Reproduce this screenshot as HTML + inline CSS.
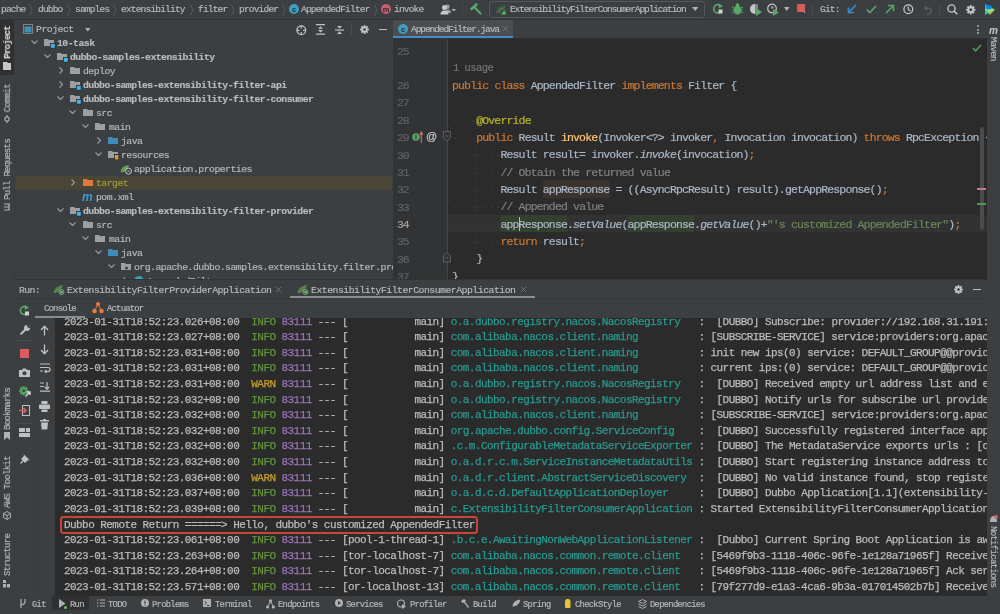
<!DOCTYPE html><html><head><meta charset="utf-8"><style>
*{margin:0;padding:0;box-sizing:border-box}
html,body{width:1000px;height:614px;overflow:hidden;background:#3c3f41;font-family:"Liberation Mono", monospace;position:relative;-webkit-font-smoothing:antialiased}
.a{position:absolute;white-space:pre;will-change:transform}
.clip{position:absolute;overflow:hidden;}
svg{position:absolute;overflow:visible}
.ws{color:#3a3a3a !important;-webkit-text-stroke:0 !important}
.cw .ws{color:#333333 !important}
.vt{position:absolute;white-space:pre;writing-mode:vertical-rl;will-change:transform}
</style></head><body>
<div class="a" style="left:0px;top:0px;width:1000px;height:19px;background:#3c3f41;"></div>
<div class="a" style="left:0px;top:19px;width:1000px;height:1px;background:#323232;"></div>
<div class="a" style="left:0px;top:20px;width:14px;height:576px;background:#3c3f41;"></div>
<div class="a" style="left:0px;top:20px;width:14px;height:55px;background:#2e3031;"></div>
<div class="a" style="left:14px;top:20px;width:1px;height:576px;background:#393b3d;"></div>
<div class="a" style="left:987px;top:20px;width:13px;height:576px;background:#3c3f41;"></div>
<div class="a" style="left:986px;top:20px;width:1px;height:576px;background:#333536;"></div>
<div class="a" style="left:15px;top:20px;width:378px;height:259px;background:#3c3f41;"></div>
<div class="a" style="left:392.5px;top:38px;width:0.5px;height:241px;background:#353739;"></div>
<div class="a" style="left:393px;top:20px;width:594px;height:18px;background:#3c3f41;"></div>
<div class="a" style="left:393px;top:20px;width:120px;height:18px;background:#4b4e50;"></div>
<div class="a" style="left:393px;top:36px;width:120px;height:2px;background:#4a88c7;"></div>
<div class="a" style="left:393px;top:38px;width:594px;height:1px;background:#323232;"></div>
<div class="a" style="left:393px;top:39px;width:54px;height:240px;background:#313335;"></div>
<div class="a" style="left:447px;top:39px;width:1px;height:240px;background:#444648;"></div>
<div class="a" style="left:448px;top:39px;width:539px;height:240px;background:#2b2b2b;"></div>
<div class="a" style="left:14px;top:279px;width:973px;height:1px;background:#333535;"></div>
<div class="a" style="left:15px;top:280px;width:972px;height:18px;background:#3c3f41;"></div>
<div class="a" style="left:15px;top:298px;width:972px;height:1px;background:#37393b;"></div>
<div class="a" style="left:15px;top:299px;width:20px;height:297px;background:#3c3f41;"></div>
<div class="a" style="left:34px;top:299px;width:1px;height:297px;background:#37393b;"></div>
<div class="a" style="left:35px;top:299px;width:952px;height:18px;background:#3c3f41;"></div>
<div class="a" style="left:35px;top:316px;width:50px;height:2px;background:#8c8c8c;"></div>
<div class="a" style="left:35px;top:318px;width:20px;height:278px;background:#3c3f41;"></div>
<div class="a" style="left:55px;top:318px;width:932px;height:277.6px;background:#2b2b2b;"></div>
<div class="a" style="left:0px;top:595.6px;width:1000px;height:0.4px;background:#37393b;"></div>
<div class="a" style="left:0px;top:596px;width:1000px;height:18px;background:#3c3f41;"></div>
<div class="a" style="left:52px;top:596px;width:37px;height:14px;background:#2e3031;"></div>
<div class="a" style="left:1px;top:3.5px;font-size:9.5px;line-height:11px;color:#bbbbbb;letter-spacing:-0.8px;font-weight:normal;-webkit-text-stroke:0.15px #bbbbbb;">pache</div>
<div class="a" style="left:38px;top:3.5px;font-size:9.5px;line-height:11px;color:#bbbbbb;letter-spacing:-0.8px;font-weight:normal;-webkit-text-stroke:0.15px #bbbbbb;">dubbo</div>
<div class="a" style="left:75px;top:3.5px;font-size:9.5px;line-height:11px;color:#bbbbbb;letter-spacing:-0.8px;font-weight:normal;-webkit-text-stroke:0.15px #bbbbbb;">samples</div>
<div class="a" style="left:121px;top:3.5px;font-size:9.5px;line-height:11px;color:#bbbbbb;letter-spacing:-0.8px;font-weight:normal;-webkit-text-stroke:0.15px #bbbbbb;">extensibility</div>
<div class="a" style="left:198px;top:3.5px;font-size:9.5px;line-height:11px;color:#bbbbbb;letter-spacing:-0.8px;font-weight:normal;-webkit-text-stroke:0.15px #bbbbbb;">filter</div>
<div class="a" style="left:239px;top:3.5px;font-size:9.5px;line-height:11px;color:#bbbbbb;letter-spacing:-0.8px;font-weight:normal;-webkit-text-stroke:0.15px #bbbbbb;">provider</div>
<div class="a" style="left:301px;top:3.5px;font-size:9.5px;line-height:11px;color:#bbbbbb;letter-spacing:-0.8px;font-weight:normal;-webkit-text-stroke:0.15px #bbbbbb;">AppendedFilter</div>
<div class="a" style="left:394px;top:3.5px;font-size:9.5px;line-height:11px;color:#bbbbbb;letter-spacing:-0.8px;font-weight:normal;-webkit-text-stroke:0.15px #bbbbbb;">invoke</div>
<svg style="left:29px;top:3.5px" width="4" height="12" viewBox="0 0 4 12"><path d="M0.5 0.5 L3 6 L0.5 11.5" fill="none" stroke="#5b5e60" stroke-width="0.9"/></svg>
<svg style="left:67px;top:3.5px" width="4" height="12" viewBox="0 0 4 12"><path d="M0.5 0.5 L3 6 L0.5 11.5" fill="none" stroke="#5b5e60" stroke-width="0.9"/></svg>
<svg style="left:113px;top:3.5px" width="4" height="12" viewBox="0 0 4 12"><path d="M0.5 0.5 L3 6 L0.5 11.5" fill="none" stroke="#5b5e60" stroke-width="0.9"/></svg>
<svg style="left:190px;top:3.5px" width="4" height="12" viewBox="0 0 4 12"><path d="M0.5 0.5 L3 6 L0.5 11.5" fill="none" stroke="#5b5e60" stroke-width="0.9"/></svg>
<svg style="left:231px;top:3.5px" width="4" height="12" viewBox="0 0 4 12"><path d="M0.5 0.5 L3 6 L0.5 11.5" fill="none" stroke="#5b5e60" stroke-width="0.9"/></svg>
<svg style="left:282px;top:3.5px" width="4" height="12" viewBox="0 0 4 12"><path d="M0.5 0.5 L3 6 L0.5 11.5" fill="none" stroke="#5b5e60" stroke-width="0.9"/></svg>
<svg style="left:374px;top:3.5px" width="4" height="12" viewBox="0 0 4 12"><path d="M0.5 0.5 L3 6 L0.5 11.5" fill="none" stroke="#5b5e60" stroke-width="0.9"/></svg>
<svg style="left:288.5px;top:4px" width="10" height="10" viewBox="0 0 10 10"><circle cx="5.0" cy="5.0" r="5.0" fill="#3f9bbf"/><text x="5.0" y="7.6" font-size="7.5" text-anchor="middle" font-family="Liberation Sans" font-weight="bold" fill="#2b2b2b">c</text></svg>
<svg style="left:381px;top:4px" width="10" height="10" viewBox="0 0 10 10"><circle cx="5.0" cy="5.0" r="5.0" fill="#c75f6e"/><text x="5.0" y="7.6" font-size="7.5" text-anchor="middle" font-family="Liberation Sans" font-weight="bold" fill="#2b2b2b">m</text></svg>
<svg style="left:440px;top:4px" width="17" height="11" viewBox="0 0 17 11"><circle cx="7.5" cy="2.8" r="2.2" fill="#9c9ea0"/><path d="M5 9 Q5 5.5 8 5.5 Q11 5.5 11 9 Z" fill="#9c9ea0"/><circle cx="4.5" cy="3.5" r="2.5" fill="#c8c8c8"/><path d="M0.5 10.5 Q0.5 6.5 4.5 6.5 Q8.5 6.5 8.5 10.5 Z" fill="#c8c8c8"/><path d="M11.5 5 L16 5 L13.75 7.5 Z" fill="#afb1b3"/></svg>
<div class="a" style="left:463px;top:3px;width:1px;height:13px;background:#424547;"></div>
<svg style="left:470px;top:3px" width="13" height="13" viewBox="0 0 13 13"><path d="M1.5 6 L6.5 1.5" stroke="#59a869" stroke-width="2.6" stroke-linecap="round"/><path d="M4 3.8 L10.5 10.5" stroke="#59a869" stroke-width="2" stroke-linecap="round"/></svg>
<div class="a" style="left:489px;top:1px;width:216px;height:17px;background:transparent;border:1px solid #555759;border-radius:3px;"></div>
<svg style="left:495px;top:3px" width="14" height="12" viewBox="0 0 14 12"><path d="M1 10 Q2 3 11 2 Q9 8 3 10 Z" fill="#3f6a3a" opacity="0.9"/><circle cx="7.5" cy="8.5" r="3" fill="none" stroke="#6a6d70" stroke-width="0.8"/><circle cx="9" cy="10" r="1.8" fill="#3fd04a"/></svg>
<div class="a" style="left:510px;top:3.5px;font-size:9.5px;line-height:11px;color:#bbbbbb;letter-spacing:-1.08px;font-weight:normal;-webkit-text-stroke:0.15px #bbbbbb;">ExtensibilityFilterConsumerApplication</div>
<svg style="left:692px;top:7px" width="7" height="5" viewBox="0 0 7 5"><path d="M0 0 H6.5 L3.25 4 Z" fill="#afb1b3"/></svg>
<svg style="left:712px;top:3px" width="12" height="12" viewBox="0 0 12 12"><path d="M9 3 A4.2 4.2 0 1 0 9.5 8" fill="none" stroke="#59a869" stroke-width="1.6"/><path d="M6.5 0.5 L11 3 L7 5.5 Z" fill="#59a869"/><rect x="6.5" y="6.5" width="4" height="4" fill="#d0d0d0"/></svg>
<svg style="left:732px;top:3px" width="11" height="12" viewBox="0 0 11 12"><ellipse cx="5.5" cy="7" rx="3.5" ry="4.5" fill="#59a869"/><path d="M0 4 L11 10 M11 4 L0 10 M0 7 H11" stroke="#59a869" stroke-width="1"/><circle cx="5.5" cy="2" r="1.8" fill="#59a869"/></svg>
<svg style="left:750px;top:3px" width="13" height="13" viewBox="0 0 13 13"><path d="M5 1 A5 5 0 1 0 5 11 Z" fill="#c5c5c5"/><path d="M5 1 H8 V11 H5" fill="#c5c5c5" opacity="0.5"/><path d="M6 5 L12 9 L6 13 Z" fill="#59a869"/></svg>
<svg style="left:767px;top:3px" width="13" height="13" viewBox="0 0 13 13"><circle cx="5" cy="5.5" r="4.3" fill="none" stroke="#c5c5c5" stroke-width="1.2"/><path d="M5 3 V5.5 L6.5 4" stroke="#c5c5c5" fill="none"/><path d="M6 6 L12 9.5 L6 13 Z" fill="#59a869"/></svg>
<svg style="left:784px;top:7px" width="6" height="5" viewBox="0 0 6 5"><path d="M0 0 H5.5 L2.75 4 Z" fill="#afb1b3"/></svg>
<svg style="left:797px;top:4px" width="9" height="10" viewBox="0 0 9 10"><rect x="0" y="0" width="8" height="8" rx="0.8" fill="#db5c5c"/><path d="M7 7 L8 9" stroke="#afb1b3"/></svg>
<div class="a" style="left:812px;top:3px;width:1px;height:13px;background:#4a4d4f;"></div>
<div class="a" style="left:820px;top:3.5px;font-size:9.5px;line-height:11px;color:#bbbbbb;letter-spacing:-0.8px;font-weight:normal;-webkit-text-stroke:0.15px #bbbbbb;">Git:</div>
<svg style="left:848px;top:4px" width="9" height="10" viewBox="0 0 9 10"><path d="M8 1 L1.5 7.5" stroke="#3d8fd0" stroke-width="1.6"/><path d="M0.5 3.5 V8.5 H5.5" fill="none" stroke="#3d8fd0" stroke-width="1.6"/></svg>
<svg style="left:866px;top:5px" width="11" height="9" viewBox="0 0 11 9"><path d="M0.8 4.5 L3.8 7.5 L10 1" fill="none" stroke="#59a869" stroke-width="1.6"/></svg>
<svg style="left:885px;top:4px" width="9" height="10" viewBox="0 0 9 10"><path d="M1 9 L7.5 2.5" stroke="#59a869" stroke-width="1.6"/><path d="M3 1.5 H8.5 V7" fill="none" stroke="#59a869" stroke-width="1.6"/></svg>
<svg style="left:903px;top:4px" width="11" height="11" viewBox="0 0 11 11"><circle cx="5.3" cy="5.3" r="4.4" fill="none" stroke="#c5c5c5" stroke-width="1.3"/><path d="M5.3 2.5 V5.5 L7.5 7" fill="none" stroke="#c5c5c5" stroke-width="1.2"/></svg>
<svg style="left:924px;top:5px" width="9" height="9" viewBox="0 0 9 9"><path d="M3 1 L0.8 3.2 L3 5.4 M1 3.2 H5 A3 3 0 0 1 5 9 H3" fill="none" stroke="#5d6062" stroke-width="1.2"/></svg>
<div class="a" style="left:939px;top:3px;width:1px;height:13px;background:#4a4d4f;"></div>
<svg style="left:947px;top:4px" width="11" height="11" viewBox="0 0 11 11"><circle cx="4.5" cy="4.5" r="3.6" fill="none" stroke="#c5c5c5" stroke-width="1.4"/><path d="M7 7 L10.3 10.3" stroke="#c5c5c5" stroke-width="1.6"/></svg>
<svg style="left:966px;top:5px" width="9.5" height="9.5" viewBox="0 0 9.5 9.5"><circle cx="4.75" cy="4.75" r="3.2300000000000004" fill="#c5c5c5"/><line x1="7.36" y1="4.75" x2="9.41" y2="4.75" stroke="#c5c5c5" stroke-width="1.90"/><line x1="6.60" y1="6.60" x2="8.04" y2="8.04" stroke="#c5c5c5" stroke-width="1.90"/><line x1="4.75" y1="7.36" x2="4.75" y2="9.41" stroke="#c5c5c5" stroke-width="1.90"/><line x1="2.90" y1="6.60" x2="1.46" y2="8.04" stroke="#c5c5c5" stroke-width="1.90"/><line x1="2.14" y1="4.75" x2="0.09" y2="4.75" stroke="#c5c5c5" stroke-width="1.90"/><line x1="2.90" y1="2.90" x2="1.46" y2="1.46" stroke="#c5c5c5" stroke-width="1.90"/><line x1="4.75" y1="2.14" x2="4.75" y2="0.09" stroke="#c5c5c5" stroke-width="1.90"/><line x1="6.60" y1="2.90" x2="8.04" y2="1.46" stroke="#c5c5c5" stroke-width="1.90"/><circle cx="4.75" cy="4.75" r="1.425" fill="#3c3f41"/></svg>
<svg style="left:984px;top:3px" width="12" height="13" viewBox="0 0 12 13"><path d="M1 1 L11 6.5 L1 12 Z" fill="#21d789"/><path d="M1 1 L8 3 L4 12 Z" fill="#087cfa" opacity="0.85"/><path d="M1 6 L11 6.5 L6 12 Z" fill="#fcf84a" opacity="0.6"/></svg>
<div class="a" style="writing-mode:vertical-rl;left:2.5px;top:26.3px;height:32.7px;width:11px;font-size:9px;line-height:11px;color:#d8d8d8;letter-spacing:-0.729px;font-weight:bold;transform:rotate(180deg);-webkit-text-stroke:0.15px #d8d8d8">Project</div>
<svg style="left:3px;top:62px" width="8" height="9" viewBox="0 0 8 9"><path d="M0 0 H4 L5 1 H8 V8 H0 Z" fill="#c8c8c8"/></svg>
<div class="a" style="writing-mode:vertical-rl;left:2.5px;top:84.39999999999999px;height:28.400000000000013px;width:11px;font-size:9px;line-height:11px;color:#bbbbbb;letter-spacing:-0.667px;font-weight:normal;transform:rotate(180deg);-webkit-text-stroke:0.15px #bbbbbb">Commit</div>
<svg style="left:3px;top:115px" width="8" height="8" viewBox="0 0 8 8"><circle cx="4" cy="4" r="2.2" fill="none" stroke="#afb1b3" stroke-width="1.2"/><path d="M4 0 V1.8 M4 6.2 V8" stroke="#afb1b3" stroke-width="1.2"/></svg>
<div class="a" style="writing-mode:vertical-rl;left:2.5px;top:139.29999999999998px;height:60.90000000000001px;width:11px;font-size:9px;line-height:11px;color:#bbbbbb;letter-spacing:-0.715px;font-weight:normal;transform:rotate(180deg);-webkit-text-stroke:0.15px #bbbbbb">Pull Requests</div>
<svg style="left:3px;top:203px" width="8" height="8" viewBox="0 0 8 8"><path d="M1 1 H7 M1 4 H6 M1 7 H7 M6 1 V7" stroke="#afb1b3" stroke-width="1.2" fill="none"/></svg>
<div class="a" style="writing-mode:vertical-rl;left:2.5px;top:387.8px;height:41.90000000000002px;width:11px;font-size:9px;line-height:11px;color:#bbbbbb;letter-spacing:-0.744px;font-weight:normal;transform:rotate(180deg);-webkit-text-stroke:0.15px #bbbbbb">Bookmarks</div>
<svg style="left:3px;top:432px" width="8" height="8" viewBox="0 0 8 8"><path d="M1 0 H7 V8 L4 5.5 L1 8 Z" fill="#afb1b3"/></svg>
<div class="a" style="writing-mode:vertical-rl;left:2.5px;top:455.6px;height:52.3px;width:11px;font-size:9px;line-height:11px;color:#bbbbbb;letter-spacing:-0.645px;font-weight:normal;transform:rotate(180deg);-webkit-text-stroke:0.15px #bbbbbb">AWS Toolkit</div>
<svg style="left:3px;top:510.5px" width="8" height="9" viewBox="0 0 8 9"><path d="M4 0.5 L7.5 2.5 V6.5 L4 8.5 L0.5 6.5 V2.5 Z M0.5 2.5 L4 4.5 L7.5 2.5 M4 4.5 V8.5" fill="none" stroke="#afb1b3" stroke-width="1"/></svg>
<div class="a" style="writing-mode:vertical-rl;left:2.5px;top:534.1px;height:42.09999999999995px;width:11px;font-size:9px;line-height:11px;color:#bbbbbb;letter-spacing:-0.722px;font-weight:normal;transform:rotate(180deg);-webkit-text-stroke:0.15px #bbbbbb">Structure</div>
<svg style="left:3px;top:579.5px" width="8" height="8" viewBox="0 0 8 8"><rect x="0" y="4" width="3" height="3.5" fill="#afb1b3"/><rect x="4" y="4" width="3" height="3.5" fill="#afb1b3"/><rect x="0" y="0" width="3" height="3" fill="#afb1b3"/></svg>
<svg style="left:989px;top:27px" width="10" height="7" viewBox="0 0 10 7"><text x="0" y="6.5" font-family="Liberation Sans" font-style="italic" font-weight="bold" font-size="10" fill="#c8c8c8">m</text></svg>
<div class="a" style="writing-mode:vertical-rl;left:987.0px;top:37.1px;height:23.599999999999998px;width:11px;font-size:9px;line-height:11px;color:#bbbbbb;letter-spacing:-0.680px;font-weight:normal;-webkit-text-stroke:0.15px #bbbbbb">Maven</div>
<svg style="left:989px;top:515px" width="9" height="8" viewBox="0 0 9 8"><path d="M1 7 Q1 1 4.5 1 Q8 1 8 7 Z" fill="#afb1b3"/><circle cx="7" cy="1.8" r="1.9" fill="#e06060"/></svg>
<div class="a" style="writing-mode:vertical-rl;left:987.4px;top:525.6px;height:61.09999999999996px;width:11px;font-size:9px;line-height:11px;color:#bbbbbb;letter-spacing:-0.700px;font-weight:normal;-webkit-text-stroke:0.15px #bbbbbb">Notifications</div>
<svg style="left:23px;top:24px" width="10" height="10" viewBox="0 0 10 10"><rect x="0.5" y="0.5" width="9" height="9" fill="none" stroke="#7d8286" stroke-width="1"/><rect x="1.5" y="2.5" width="7" height="6" fill="#3d8fb5"/></svg>
<div class="a" style="left:36.4px;top:24px;font-size:9.8px;line-height:11px;color:#bbbbbb;letter-spacing:-0.5px;font-weight:normal;-webkit-text-stroke:0.15px #bbbbbb;">Project</div>
<svg style="left:85px;top:28px" width="6" height="4" viewBox="0 0 6 4"><path d="M0 0 H5.5 L2.75 3.5 Z" fill="#afb1b3"/></svg>
<svg style="left:296px;top:24.5px" width="11" height="11" viewBox="0 0 11 11"><circle cx="5.3" cy="5.3" r="4.4" fill="none" stroke="#c0c0c0" stroke-width="1.2"/><path d="M5.3 0.5 V3.5 M5.3 7 V10 M0.5 5.3 H3.5 M7 5.3 H10" stroke="#c0c0c0" stroke-width="1.2"/></svg>
<svg style="left:316px;top:24px" width="9" height="11" viewBox="0 0 9 11"><path d="M0 0.6 H9 M0 10.2 H9" stroke="#c0c0c0" stroke-width="1.2"/><path d="M4.5 2.2 L7 4.8 H2 Z M4.5 8.6 L7 6 H2 Z" fill="#c0c0c0"/></svg>
<svg style="left:335px;top:24.5px" width="9" height="10" viewBox="0 0 9 10"><path d="M0 5 H9" stroke="#c0c0c0" stroke-width="1.2"/><path d="M4.5 3.8 L7 1 H2 Z M4.5 6.2 L7 9 H2 Z" fill="#c0c0c0"/></svg>
<div class="a" style="left:351px;top:23px;width:1px;height:12px;background:#4a4d4f;"></div>
<svg style="left:359.5px;top:24.5px" width="9" height="9" viewBox="0 0 9 9"><circle cx="4.5" cy="4.5" r="3.06" fill="#c5c5c5"/><line x1="6.97" y1="4.50" x2="8.91" y2="4.50" stroke="#c5c5c5" stroke-width="1.80"/><line x1="6.25" y1="6.25" x2="7.62" y2="7.62" stroke="#c5c5c5" stroke-width="1.80"/><line x1="4.50" y1="6.97" x2="4.50" y2="8.91" stroke="#c5c5c5" stroke-width="1.80"/><line x1="2.75" y1="6.25" x2="1.38" y2="7.62" stroke="#c5c5c5" stroke-width="1.80"/><line x1="2.02" y1="4.50" x2="0.09" y2="4.50" stroke="#c5c5c5" stroke-width="1.80"/><line x1="2.75" y1="2.75" x2="1.38" y2="1.38" stroke="#c5c5c5" stroke-width="1.80"/><line x1="4.50" y1="2.02" x2="4.50" y2="0.09" stroke="#c5c5c5" stroke-width="1.80"/><line x1="6.25" y1="2.75" x2="7.62" y2="1.38" stroke="#c5c5c5" stroke-width="1.80"/><circle cx="4.5" cy="4.5" r="1.3499999999999999" fill="#3c3f41"/></svg>
<div class="a" style="left:379px;top:28.5px;width:8px;height:1.3px;background:#c0c0c0;"></div>
<div class="clip" style="left:15px;top:38px;width:377.5px;height:241px;">
<div class="a" style="left:0px;top:138px;width:377px;height:14px;background:#4a4637;"></div>
<svg style="left:16.0px;top:2.1999999999999957px" width="7" height="5" viewBox="0 0 7 5"><path d="M0.5 0.5 L3.5 3.5 L6.5 0.5" fill="none" stroke="#9a9c9e" stroke-width="1.1"/></svg>
<svg style="left:29.200000000000003px;top:1.0px" width="11" height="8" viewBox="0 0 11 8"><path d="M0 0 H4 L5 1 H10 V7 H0 Z" fill="#9aa0a6"/></svg>
<svg style="left:35.2px;top:5.0px" width="6" height="6" viewBox="0 0 6 6"><rect x="0" y="0" width="5.5" height="5.5" fill="#2b2d2e"/><rect x="0.8" y="0.8" width="4" height="4" fill="#3fb3e6"/></svg>
<div class="a" style="left:42.4px;top:0.0999999999999972px;font-size:9.8px;line-height:12px;color:#bbbbbb;letter-spacing:-0.52px;font-weight:bold;-webkit-text-stroke:0.15px #bbbbbb;">10-task</div>
<svg style="left:28.799999999999997px;top:16.199999999999996px" width="7" height="5" viewBox="0 0 7 5"><path d="M0.5 0.5 L3.5 3.5 L6.5 0.5" fill="none" stroke="#9a9c9e" stroke-width="1.1"/></svg>
<svg style="left:42.0px;top:15.0px" width="11" height="8" viewBox="0 0 11 8"><path d="M0 0 H4 L5 1 H10 V7 H0 Z" fill="#9aa0a6"/></svg>
<svg style="left:48.0px;top:19.0px" width="6" height="6" viewBox="0 0 6 6"><rect x="0" y="0" width="5.5" height="5.5" fill="#2b2d2e"/><rect x="0.8" y="0.8" width="4" height="4" fill="#3fb3e6"/></svg>
<div class="a" style="left:55.2px;top:14.099999999999998px;font-size:9.8px;line-height:12px;color:#bbbbbb;letter-spacing:-0.52px;font-weight:bold;-webkit-text-stroke:0.15px #bbbbbb;">dubbo-samples-extensibility</div>
<svg style="left:43.6px;top:29.299999999999997px" width="5" height="7" viewBox="0 0 5 7"><path d="M0.5 0.5 L3.5 3.5 L0.5 6.5" fill="none" stroke="#9a9c9e" stroke-width="1.1"/></svg>
<svg style="left:54.80000000000001px;top:29.0px" width="11" height="8" viewBox="0 0 11 8"><path d="M0 0 H4 L5 1 H10 V7 H0 Z" fill="#9aa0a6"/></svg>
<div class="a" style="left:68.0px;top:28.099999999999998px;font-size:9.8px;line-height:12px;color:#bbbbbb;letter-spacing:-0.52px;font-weight:normal;-webkit-text-stroke:0.15px #bbbbbb;">deploy</div>
<svg style="left:43.6px;top:43.3px" width="5" height="7" viewBox="0 0 5 7"><path d="M0.5 0.5 L3.5 3.5 L0.5 6.5" fill="none" stroke="#9a9c9e" stroke-width="1.1"/></svg>
<svg style="left:54.80000000000001px;top:43.0px" width="11" height="8" viewBox="0 0 11 8"><path d="M0 0 H4 L5 1 H10 V7 H0 Z" fill="#9aa0a6"/></svg>
<svg style="left:60.80000000000001px;top:47.0px" width="6" height="6" viewBox="0 0 6 6"><rect x="0" y="0" width="5.5" height="5.5" fill="#2b2d2e"/><rect x="0.8" y="0.8" width="4" height="4" fill="#3fb3e6"/></svg>
<div class="a" style="left:68.0px;top:42.099999999999994px;font-size:9.8px;line-height:12px;color:#bbbbbb;letter-spacing:-0.52px;font-weight:bold;-webkit-text-stroke:0.15px #bbbbbb;">dubbo-samples-extensibility-filter-api</div>
<svg style="left:41.6px;top:58.2px" width="7" height="5" viewBox="0 0 7 5"><path d="M0.5 0.5 L3.5 3.5 L6.5 0.5" fill="none" stroke="#9a9c9e" stroke-width="1.1"/></svg>
<svg style="left:54.80000000000001px;top:57.0px" width="11" height="8" viewBox="0 0 11 8"><path d="M0 0 H4 L5 1 H10 V7 H0 Z" fill="#9aa0a6"/></svg>
<svg style="left:60.80000000000001px;top:61.0px" width="6" height="6" viewBox="0 0 6 6"><rect x="0" y="0" width="5.5" height="5.5" fill="#2b2d2e"/><rect x="0.8" y="0.8" width="4" height="4" fill="#3fb3e6"/></svg>
<div class="a" style="left:68.0px;top:56.099999999999994px;font-size:9.8px;line-height:12px;color:#bbbbbb;letter-spacing:-0.52px;font-weight:bold;-webkit-text-stroke:0.15px #bbbbbb;">dubbo-samples-extensibility-filter-consumer</div>
<svg style="left:54.400000000000006px;top:72.2px" width="7" height="5" viewBox="0 0 7 5"><path d="M0.5 0.5 L3.5 3.5 L6.5 0.5" fill="none" stroke="#9a9c9e" stroke-width="1.1"/></svg>
<svg style="left:67.60000000000001px;top:71.0px" width="11" height="8" viewBox="0 0 11 8"><path d="M0 0 H4 L5 1 H10 V7 H0 Z" fill="#9aa0a6"/></svg>
<div class="a" style="left:80.80000000000001px;top:70.1px;font-size:9.8px;line-height:12px;color:#bbbbbb;letter-spacing:-0.52px;font-weight:normal;-webkit-text-stroke:0.15px #bbbbbb;">src</div>
<svg style="left:67.2px;top:86.2px" width="7" height="5" viewBox="0 0 7 5"><path d="M0.5 0.5 L3.5 3.5 L6.5 0.5" fill="none" stroke="#9a9c9e" stroke-width="1.1"/></svg>
<svg style="left:80.4px;top:85.0px" width="11" height="8" viewBox="0 0 11 8"><path d="M0 0 H4 L5 1 H10 V7 H0 Z" fill="#9aa0a6"/></svg>
<div class="a" style="left:93.6px;top:84.1px;font-size:9.8px;line-height:12px;color:#bbbbbb;letter-spacing:-0.52px;font-weight:normal;-webkit-text-stroke:0.15px #bbbbbb;">main</div>
<svg style="left:82.0px;top:99.30000000000001px" width="5" height="7" viewBox="0 0 5 7"><path d="M0.5 0.5 L3.5 3.5 L0.5 6.5" fill="none" stroke="#9a9c9e" stroke-width="1.1"/></svg>
<svg style="left:93.2px;top:99.0px" width="11" height="8" viewBox="0 0 11 8"><path d="M0 0 H4 L5 1 H10 V7 H0 Z" fill="#3e8db8"/></svg>
<div class="a" style="left:106.4px;top:98.10000000000001px;font-size:9.8px;line-height:12px;color:#bbbbbb;letter-spacing:-0.52px;font-weight:normal;-webkit-text-stroke:0.15px #bbbbbb;">java</div>
<svg style="left:80.0px;top:114.20000000000002px" width="7" height="5" viewBox="0 0 7 5"><path d="M0.5 0.5 L3.5 3.5 L6.5 0.5" fill="none" stroke="#9a9c9e" stroke-width="1.1"/></svg>
<svg style="left:93.2px;top:113.0px" width="11" height="8" viewBox="0 0 11 8"><path d="M0 0 H4 L5 1 H10 V7 H0 Z" fill="#9aa0a6"/></svg>
<svg style="left:99.2px;top:116.0px" width="6" height="7" viewBox="0 0 6 7"><rect x="0" y="0" width="5" height="6" fill="#2b2d2e"/><rect x="0.8" y="1" width="3.6" height="4.5" fill="#c9a04a"/></svg>
<div class="a" style="left:106.4px;top:112.10000000000001px;font-size:9.8px;line-height:12px;color:#bbbbbb;letter-spacing:-0.52px;font-weight:normal;-webkit-text-stroke:0.15px #bbbbbb;">resources</div>
<svg style="left:105.00000000000001px;top:125.80000000000001px" width="13" height="11" viewBox="0 0 13 11"><path d="M0.5 8 Q1 2 9 1 Q8 7 2 8.5 Z" fill="#62a34f"/><circle cx="8.5" cy="7.2" r="3" fill="#3c3f41" stroke="#c8c8c8" stroke-width="1"/><path d="M7.3 7.2 H9.7" stroke="#c8c8c8" stroke-width="0.9"/></svg>
<div class="a" style="left:119.20000000000002px;top:126.10000000000001px;font-size:9.8px;line-height:12px;color:#bbbbbb;letter-spacing:-0.52px;font-weight:normal;-webkit-text-stroke:0.15px #bbbbbb;">application.properties</div>
<svg style="left:56.400000000000006px;top:141.3px" width="5" height="7" viewBox="0 0 5 7"><path d="M0.5 0.5 L3.5 3.5 L0.5 6.5" fill="none" stroke="#9a9c9e" stroke-width="1.1"/></svg>
<svg style="left:67.60000000000001px;top:141.0px" width="11" height="8" viewBox="0 0 11 8"><path d="M0 0 H4 L5 1 H10 V7 H0 Z" fill="#e0783c"/></svg>
<div class="a" style="left:80.80000000000001px;top:140.10000000000002px;font-size:9.8px;line-height:12px;color:#a09c3a;letter-spacing:-0.52px;font-weight:normal;-webkit-text-stroke:0.15px #a09c3a;">target</div>
<svg style="left:66.60000000000001px;top:153.8px" width="12" height="10" viewBox="0 0 12 10"><text x="0" y="8.5" font-family="Liberation Sans" font-style="italic" font-weight="bold" font-size="12" fill="#3d9bd1">m</text></svg>
<div class="a" style="left:80.80000000000001px;top:154.10000000000002px;font-size:9.8px;line-height:12px;color:#bbbbbb;letter-spacing:-0.52px;font-weight:normal;-webkit-text-stroke:0.15px #bbbbbb;">pom.xml</div>
<svg style="left:41.6px;top:170.20000000000002px" width="7" height="5" viewBox="0 0 7 5"><path d="M0.5 0.5 L3.5 3.5 L6.5 0.5" fill="none" stroke="#9a9c9e" stroke-width="1.1"/></svg>
<svg style="left:54.80000000000001px;top:169.0px" width="11" height="8" viewBox="0 0 11 8"><path d="M0 0 H4 L5 1 H10 V7 H0 Z" fill="#9aa0a6"/></svg>
<svg style="left:60.80000000000001px;top:173.0px" width="6" height="6" viewBox="0 0 6 6"><rect x="0" y="0" width="5.5" height="5.5" fill="#2b2d2e"/><rect x="0.8" y="0.8" width="4" height="4" fill="#3fb3e6"/></svg>
<div class="a" style="left:68.0px;top:168.10000000000002px;font-size:9.8px;line-height:12px;color:#bbbbbb;letter-spacing:-0.52px;font-weight:bold;-webkit-text-stroke:0.15px #bbbbbb;">dubbo-samples-extensibility-filter-provider</div>
<svg style="left:54.400000000000006px;top:184.20000000000002px" width="7" height="5" viewBox="0 0 7 5"><path d="M0.5 0.5 L3.5 3.5 L6.5 0.5" fill="none" stroke="#9a9c9e" stroke-width="1.1"/></svg>
<svg style="left:67.60000000000001px;top:183.0px" width="11" height="8" viewBox="0 0 11 8"><path d="M0 0 H4 L5 1 H10 V7 H0 Z" fill="#9aa0a6"/></svg>
<div class="a" style="left:80.80000000000001px;top:182.10000000000002px;font-size:9.8px;line-height:12px;color:#bbbbbb;letter-spacing:-0.52px;font-weight:normal;-webkit-text-stroke:0.15px #bbbbbb;">src</div>
<svg style="left:67.2px;top:198.20000000000002px" width="7" height="5" viewBox="0 0 7 5"><path d="M0.5 0.5 L3.5 3.5 L6.5 0.5" fill="none" stroke="#9a9c9e" stroke-width="1.1"/></svg>
<svg style="left:80.4px;top:197.0px" width="11" height="8" viewBox="0 0 11 8"><path d="M0 0 H4 L5 1 H10 V7 H0 Z" fill="#9aa0a6"/></svg>
<div class="a" style="left:93.6px;top:196.10000000000002px;font-size:9.8px;line-height:12px;color:#bbbbbb;letter-spacing:-0.52px;font-weight:normal;-webkit-text-stroke:0.15px #bbbbbb;">main</div>
<svg style="left:80.0px;top:212.20000000000002px" width="7" height="5" viewBox="0 0 7 5"><path d="M0.5 0.5 L3.5 3.5 L6.5 0.5" fill="none" stroke="#9a9c9e" stroke-width="1.1"/></svg>
<svg style="left:93.2px;top:211.0px" width="11" height="8" viewBox="0 0 11 8"><path d="M0 0 H4 L5 1 H10 V7 H0 Z" fill="#3e8db8"/></svg>
<div class="a" style="left:106.4px;top:210.10000000000002px;font-size:9.8px;line-height:12px;color:#bbbbbb;letter-spacing:-0.52px;font-weight:normal;-webkit-text-stroke:0.15px #bbbbbb;">java</div>
<svg style="left:92.80000000000001px;top:226.2px" width="7" height="5" viewBox="0 0 7 5"><path d="M0.5 0.5 L3.5 3.5 L6.5 0.5" fill="none" stroke="#9a9c9e" stroke-width="1.1"/></svg>
<svg style="left:106.00000000000001px;top:225.0px" width="11" height="8" viewBox="0 0 11 8"><path d="M0 0 H4 L5 1 H10 V7 H0 Z" fill="#9aa0a6"/></svg>
<svg style="left:109.00000000000001px;top:228.0px" width="5" height="4" viewBox="0 0 5 4"><circle cx="2.5" cy="2" r="1.5" fill="#3c3f41"/></svg>
<div class="a" style="left:119.20000000000002px;top:224.10000000000002px;font-size:9.8px;line-height:12px;color:#bbbbbb;letter-spacing:-0.52px;font-weight:normal;-webkit-text-stroke:0.15px #bbbbbb;">org.apache.dubbo.samples.extensibility.filter.provider</div>
<svg style="left:107.60000000000001px;top:239.3px" width="5" height="7" viewBox="0 0 5 7"><path d="M0.5 0.5 L3.5 3.5 L0.5 6.5" fill="none" stroke="#9a9c9e" stroke-width="1.1"/></svg>
<svg style="left:118.80000000000001px;top:237.8px" width="10" height="10" viewBox="0 0 10 10"><circle cx="5.0" cy="5.0" r="5.0" fill="#3f9bbf"/><text x="5.0" y="7.6" font-size="7.5" text-anchor="middle" font-family="Liberation Sans" font-weight="bold" fill="#2b2b2b">c</text></svg>
<div class="a" style="left:132.0px;top:238.10000000000002px;font-size:9.8px;line-height:12px;color:#bbbbbb;letter-spacing:-0.52px;font-weight:normal;-webkit-text-stroke:0.15px #bbbbbb;">AppendedFilter</div>
</div>
<svg style="left:398px;top:24px" width="10" height="10" viewBox="0 0 10 10"><circle cx="5.0" cy="5.0" r="5.0" fill="#3f9bbf"/><text x="5.0" y="7.6" font-size="7.5" text-anchor="middle" font-family="Liberation Sans" font-weight="bold" fill="#2b2b2b">c</text></svg>
<div class="a" style="left:411px;top:23.5px;font-size:9.5px;line-height:11px;color:#bbbbbb;letter-spacing:-1.07px;font-weight:normal;-webkit-text-stroke:0.15px #bbbbbb;">AppendedFilter.java</div>
<svg style="left:502px;top:25px" width="7" height="7" viewBox="0 0 7 7"><path d="M1 1 L6 6 M6 1 L1 6" stroke="#6e7072" stroke-width="1"/></svg>
<div class="a" style="left:976.5px;top:25px;width:2px;height:2px;background:#afb1b3;border-radius:1px"></div>
<div class="a" style="left:976.5px;top:28.5px;width:2px;height:2px;background:#afb1b3;border-radius:1px"></div>
<div class="a" style="left:976.5px;top:32px;width:2px;height:2px;background:#afb1b3;border-radius:1px"></div>
<svg style="left:972px;top:44px" width="10" height="8" viewBox="0 0 10 8"><path d="M0.8 4 L3.6 6.8 L9 1" fill="none" stroke="#4f9a5a" stroke-width="1.7"/></svg>
<div class="clip" style="left:393px;top:39px;width:594px;height:240px;">
<div class="a" style="left:55px;top:176.20000000000002px;width:539px;height:16.5px;background:#323232;"></div>
<div class="a" style="left:82.5px;top:105.95000000000002px;width:1px;height:105.44999999999996px;background:#323334;"></div>
<div class="a" style="left:149.75px;top:141.2px;width:66.55px;height:17.6px;background:#3d332e;"></div>
<div class="a" style="left:107.39999999999998px;top:176.20000000000002px;width:66.55px;height:16.5px;background:#33402f;"></div>
<div class="a" style="left:234.45000000000005px;top:176.20000000000002px;width:66.55px;height:16.5px;background:#33402f;"></div>
<div class="a" style="left:3.5px;top:5.900000000000003px;font-size:11.5px;line-height:13px;color:#606366;letter-spacing:-1.15px;font-weight:normal;-webkit-text-stroke:0.15px #606366;">25</div>
<div class="a" style="left:3.5px;top:40.10000000000001px;font-size:11.5px;line-height:13px;color:#606366;letter-spacing:-1.15px;font-weight:normal;-webkit-text-stroke:0.15px #606366;">26</div>
<div class="a" style="left:59px;top:39.800000000000004px;font-size:11.5px;line-height:13px;color:#a9b7c6;letter-spacing:-0.85px;font-weight:normal;"><span style="color:#cc7832;-webkit-text-stroke:0.2px #cc7832;">public<span class="ws">·</span>class<span class="ws">·</span></span><span style="color:#a9b7c6;-webkit-text-stroke:0.2px #a9b7c6;">AppendedFilter<span class="ws">·</span></span><span style="color:#cc7832;-webkit-text-stroke:0.2px #cc7832;">implements<span class="ws">·</span></span><span style="color:#a9b7c6;-webkit-text-stroke:0.2px #a9b7c6;">Filter<span class="ws">·</span>{</span></div>
<div class="a" style="left:3.5px;top:57.45px;font-size:11.5px;line-height:13px;color:#606366;letter-spacing:-1.15px;font-weight:normal;-webkit-text-stroke:0.15px #606366;">27</div>
<div class="a" style="left:3.5px;top:74.80000000000001px;font-size:11.5px;line-height:13px;color:#606366;letter-spacing:-1.15px;font-weight:normal;-webkit-text-stroke:0.15px #606366;">28</div>
<div class="a" style="left:59px;top:74.50000000000001px;font-size:11.5px;line-height:13px;color:#a9b7c6;letter-spacing:-0.85px;font-weight:normal;"><span style="color:#a9b7c6;-webkit-text-stroke:0.2px #a9b7c6;"><span class="ws">····</span></span><span style="color:#bbb529;-webkit-text-stroke:0.2px #bbb529;">@Override</span></div>
<div class="a" style="left:3.5px;top:92.15000000000002px;font-size:11.5px;line-height:13px;color:#606366;letter-spacing:-1.15px;font-weight:normal;-webkit-text-stroke:0.15px #606366;">29</div>
<div class="a" style="left:59px;top:91.85000000000002px;font-size:11.5px;line-height:13px;color:#a9b7c6;letter-spacing:-0.85px;font-weight:normal;"><span style="color:#cc7832;-webkit-text-stroke:0.2px #cc7832;"><span class="ws">····</span>public<span class="ws">·</span></span><span style="color:#a9b7c6;-webkit-text-stroke:0.2px #a9b7c6;">Result<span class="ws">·</span></span><span style="color:#ffc66d;-webkit-text-stroke:0.2px #ffc66d;">invoke</span><span style="color:#a9b7c6;-webkit-text-stroke:0.2px #a9b7c6;">(Invoker&lt;?&gt;<span class="ws">·</span>invoker</span><span style="color:#cc7832;-webkit-text-stroke:0.2px #cc7832;">,<span class="ws">·</span></span><span style="color:#a9b7c6;-webkit-text-stroke:0.2px #a9b7c6;">Invocation<span class="ws">·</span>invocation)<span class="ws">·</span></span><span style="color:#cc7832;-webkit-text-stroke:0.2px #cc7832;">throws<span class="ws">·</span></span><span style="color:#a9b7c6;-webkit-text-stroke:0.2px #a9b7c6;">RpcException<span class="ws">·</span>{</span></div>
<div class="a" style="left:3.5px;top:109.50000000000001px;font-size:11.5px;line-height:13px;color:#606366;letter-spacing:-1.15px;font-weight:normal;-webkit-text-stroke:0.15px #606366;">30</div>
<div class="a" style="left:59px;top:109.20000000000002px;font-size:11.5px;line-height:13px;color:#a9b7c6;letter-spacing:-0.85px;font-weight:normal;"><span style="color:#a9b7c6;-webkit-text-stroke:0.2px #a9b7c6;"><span class="ws">········</span>Result<span class="ws">·</span>result=<span class="ws">·</span>invoker.</span><span style="color:#a9b7c6;-webkit-text-stroke:0.2px #a9b7c6;font-style:italic">invoke</span><span style="color:#a9b7c6;-webkit-text-stroke:0.2px #a9b7c6;">(invocation)</span><span style="color:#cc7832;-webkit-text-stroke:0.2px #cc7832;">;</span></div>
<div class="a" style="left:3.5px;top:126.85000000000001px;font-size:11.5px;line-height:13px;color:#606366;letter-spacing:-1.15px;font-weight:normal;-webkit-text-stroke:0.15px #606366;">31</div>
<div class="a" style="left:59px;top:126.55000000000001px;font-size:11.5px;line-height:13px;color:#a9b7c6;letter-spacing:-0.85px;font-weight:normal;"><span style="color:#808080;-webkit-text-stroke:0.2px #808080;"><span class="ws">········</span>//<span class="ws">·</span>Obtain<span class="ws">·</span>the<span class="ws">·</span>returned<span class="ws">·</span>value</span></div>
<div class="a" style="left:3.5px;top:144.2px;font-size:11.5px;line-height:13px;color:#606366;letter-spacing:-1.15px;font-weight:normal;-webkit-text-stroke:0.15px #606366;">32</div>
<div class="a" style="left:59px;top:143.9px;font-size:11.5px;line-height:13px;color:#a9b7c6;letter-spacing:-0.85px;font-weight:normal;"><span style="color:#a9b7c6;-webkit-text-stroke:0.2px #a9b7c6;"><span class="ws">········</span>Result<span class="ws">·</span></span><span style="color:#a9b7c6;-webkit-text-stroke:0.2px #a9b7c6;">appResponse</span><span style="color:#a9b7c6;-webkit-text-stroke:0.2px #a9b7c6;"><span class="ws">·</span>=<span class="ws">·</span>((AsyncRpcResult)<span class="ws">·</span>result).getAppResponse()</span><span style="color:#cc7832;-webkit-text-stroke:0.2px #cc7832;">;</span></div>
<div class="a" style="left:3.5px;top:161.55px;font-size:11.5px;line-height:13px;color:#606366;letter-spacing:-1.15px;font-weight:normal;-webkit-text-stroke:0.15px #606366;">33</div>
<div class="a" style="left:59px;top:161.25000000000003px;font-size:11.5px;line-height:13px;color:#a9b7c6;letter-spacing:-0.85px;font-weight:normal;"><span style="color:#808080;-webkit-text-stroke:0.2px #808080;"><span class="ws">········</span>//<span class="ws">·</span>Appended<span class="ws">·</span>value</span></div>
<div class="a" style="left:3.5px;top:178.9px;font-size:11.5px;line-height:13px;color:#a4a3a3;letter-spacing:-1.15px;font-weight:normal;-webkit-text-stroke:0.15px #a4a3a3;">34</div>
<div class="a" style="left:59px;top:178.60000000000002px;font-size:11.5px;line-height:13px;color:#a9b7c6;letter-spacing:-0.85px;font-weight:normal;"><span style="color:#a9b7c6;-webkit-text-stroke:0.2px #a9b7c6;"><span class="ws">········</span></span><span style="color:#a9b7c6;-webkit-text-stroke:0.2px #a9b7c6;">appResponse</span><span style="color:#a9b7c6;-webkit-text-stroke:0.2px #a9b7c6;">.</span><span style="color:#a9b7c6;-webkit-text-stroke:0.2px #a9b7c6;font-style:italic">setValue</span><span style="color:#a9b7c6;-webkit-text-stroke:0.2px #a9b7c6;">(</span><span style="color:#a9b7c6;-webkit-text-stroke:0.2px #a9b7c6;">appResponse</span><span style="color:#a9b7c6;-webkit-text-stroke:0.2px #a9b7c6;">.</span><span style="color:#a9b7c6;-webkit-text-stroke:0.2px #a9b7c6;font-style:italic">getValue</span><span style="color:#a9b7c6;-webkit-text-stroke:0.2px #a9b7c6;">()+</span><span style="color:#6a8759;-webkit-text-stroke:0.2px #6a8759;">"'s<span class="ws">·</span>customized<span class="ws">·</span>AppendedFilter"</span><span style="color:#a9b7c6;-webkit-text-stroke:0.2px #a9b7c6;">)</span><span style="color:#cc7832;-webkit-text-stroke:0.2px #cc7832;">;</span></div>
<div class="a" style="left:3.5px;top:196.25px;font-size:11.5px;line-height:13px;color:#606366;letter-spacing:-1.15px;font-weight:normal;-webkit-text-stroke:0.15px #606366;">35</div>
<div class="a" style="left:59px;top:195.95000000000002px;font-size:11.5px;line-height:13px;color:#a9b7c6;letter-spacing:-0.85px;font-weight:normal;"><span style="color:#a9b7c6;-webkit-text-stroke:0.2px #a9b7c6;"><span class="ws">········</span></span><span style="color:#cc7832;-webkit-text-stroke:0.2px #cc7832;">return<span class="ws">·</span></span><span style="color:#a9b7c6;-webkit-text-stroke:0.2px #a9b7c6;">result</span><span style="color:#cc7832;-webkit-text-stroke:0.2px #cc7832;">;</span></div>
<div class="a" style="left:3.5px;top:213.59999999999997px;font-size:11.5px;line-height:13px;color:#606366;letter-spacing:-1.15px;font-weight:normal;-webkit-text-stroke:0.15px #606366;">36</div>
<div class="a" style="left:59px;top:213.29999999999998px;font-size:11.5px;line-height:13px;color:#a9b7c6;letter-spacing:-0.85px;font-weight:normal;"><span style="color:#a9b7c6;-webkit-text-stroke:0.2px #a9b7c6;"><span class="ws">····</span>}</span></div>
<div class="a" style="left:3.5px;top:230.95px;font-size:11.5px;line-height:13px;color:#606366;letter-spacing:-1.15px;font-weight:normal;-webkit-text-stroke:0.15px #606366;">37</div>
<div class="a" style="left:59px;top:230.65px;font-size:11.5px;line-height:13px;color:#a9b7c6;letter-spacing:-0.85px;font-weight:normal;"><span style="color:#a9b7c6;-webkit-text-stroke:0.2px #a9b7c6;">}</span></div>
<div class="a" style="left:59.60000000000002px;top:23.400000000000002px;font-size:10.5px;line-height:13px;color:#787878;letter-spacing:-0.55px;font-weight:normal;-webkit-text-stroke:0.15px #787878;">1 usage</div>
<div class="a" style="left:125.54999999999995px;top:177.9px;width:1.2px;height:14px;background:#bbbbbb;"></div>
</div>
<svg style="left:411.5px;top:130.5px" width="12" height="12" viewBox="0 0 12 12"><circle cx="4" cy="6" r="3.7" fill="#59a869"/><path d="M4 3.8 V8.2" stroke="#2b2b2b" stroke-width="1.1"/><path d="M9.3 11.5 V1.8 M7.8 3.6 L9.3 1.2 L10.8 3.6" fill="none" stroke="#d36a6a" stroke-width="1.2"/></svg>
<div class="a" style="left:425.8px;top:130.3px;font-size:11px;line-height:13px;color:#c8c8c8;letter-spacing:0px;font-weight:normal;-webkit-text-stroke:0.2px #c8c8c8;font-family:Liberation Sans,sans-serif;">@</div>
<svg style="left:443px;top:131px" width="9" height="11" viewBox="0 0 9 11"><path d="M0.5 0.5 H7.5 V7 L4 10 L0.5 7 Z" fill="#313335" stroke="#606366" stroke-width="0.9"/><path d="M2.5 5 H5.5" stroke="#606366"/></svg>
<svg style="left:443px;top:252px" width="9" height="11" viewBox="0 0 9 11"><path d="M0.5 10 H7.5 V3.5 L4 0.5 L0.5 3.5 Z" fill="#313335" stroke="#606366" stroke-width="0.9"/><path d="M2.5 6 H5.5" stroke="#606366"/></svg>
<div class="a" style="left:980px;top:127px;width:4px;height:103px;background:#4a4c4e;border-radius:2px"></div>
<div class="a" style="left:977px;top:188px;width:9px;height:1.5px;background:#c77a8a;"></div>
<div class="a" style="left:977px;top:202.5px;width:9px;height:1.5px;background:#4b9a4e;"></div>
<div class="a" style="left:19px;top:284.5px;font-size:9.8px;line-height:11px;color:#bbbbbb;letter-spacing:-0.6px;font-weight:normal;-webkit-text-stroke:0.15px #bbbbbb;">Run:</div>
<svg style="left:53px;top:283.5px" width="12" height="11" viewBox="0 0 12 11"><path d="M0.5 9 Q1.5 2 10 1 Q8.5 7 2.5 9 Z" fill="#5a8f4a" opacity="0.85"/><circle cx="8.5" cy="8" r="2.5" fill="#3c3f41" stroke="#aaaaaa" stroke-width="0.8"/><circle cx="8.5" cy="8" r="1.6" fill="#4ec05a"/></svg>
<div class="a" style="left:66.8px;top:284.5px;font-size:9.8px;line-height:11px;color:#bbbbbb;letter-spacing:-0.5px;font-weight:normal;-webkit-text-stroke:0.15px #bbbbbb;">ExtensibilityFilterProviderApplication</div>
<svg style="left:275px;top:286px" width="7" height="7" viewBox="0 0 7 7"><path d="M1 1 L6 6 M6 1 L1 6" stroke="#6e7072" stroke-width="1"/></svg>
<svg style="left:297px;top:283.5px" width="12" height="11" viewBox="0 0 12 11"><path d="M0.5 9 Q1.5 2 10 1 Q8.5 7 2.5 9 Z" fill="#5a8f4a" opacity="0.85"/><circle cx="8.5" cy="8" r="2.5" fill="#3c3f41" stroke="#aaaaaa" stroke-width="0.8"/><circle cx="8.5" cy="8" r="1.6" fill="#4ec05a"/></svg>
<div class="a" style="left:311px;top:284.5px;font-size:9.8px;line-height:11px;color:#bbbbbb;letter-spacing:-0.5px;font-weight:normal;-webkit-text-stroke:0.15px #bbbbbb;">ExtensibilityFilterConsumerApplication</div>
<svg style="left:520px;top:286px" width="7" height="7" viewBox="0 0 7 7"><path d="M1 1 L6 6 M6 1 L1 6" stroke="#6e7072" stroke-width="1"/></svg>
<div class="a" style="left:290px;top:296px;width:245px;height:2px;background:#8c8c8c;"></div>
<svg style="left:953.5px;top:284.5px" width="9" height="9" viewBox="0 0 9 9"><circle cx="4.5" cy="4.5" r="3.06" fill="#c5c5c5"/><line x1="6.97" y1="4.50" x2="8.91" y2="4.50" stroke="#c5c5c5" stroke-width="1.80"/><line x1="6.25" y1="6.25" x2="7.62" y2="7.62" stroke="#c5c5c5" stroke-width="1.80"/><line x1="4.50" y1="6.97" x2="4.50" y2="8.91" stroke="#c5c5c5" stroke-width="1.80"/><line x1="2.75" y1="6.25" x2="1.38" y2="7.62" stroke="#c5c5c5" stroke-width="1.80"/><line x1="2.02" y1="4.50" x2="0.09" y2="4.50" stroke="#c5c5c5" stroke-width="1.80"/><line x1="2.75" y1="2.75" x2="1.38" y2="1.38" stroke="#c5c5c5" stroke-width="1.80"/><line x1="4.50" y1="2.02" x2="4.50" y2="0.09" stroke="#c5c5c5" stroke-width="1.80"/><line x1="6.25" y1="2.75" x2="7.62" y2="1.38" stroke="#c5c5c5" stroke-width="1.80"/><circle cx="4.5" cy="4.5" r="1.3499999999999999" fill="#3c3f41"/></svg>
<div class="a" style="left:973px;top:288.5px;width:8px;height:1.3px;background:#c0c0c0;"></div>
<div class="a" style="left:44px;top:303.5px;font-size:9px;line-height:11px;color:#bbbbbb;letter-spacing:-0.85px;font-weight:normal;-webkit-text-stroke:0.15px #bbbbbb;">Console</div>
<svg style="left:92px;top:302px" width="12" height="12" viewBox="0 0 12 12"><circle cx="6" cy="2" r="2" fill="#e57b3d"/><circle cx="2.5" cy="9" r="2.3" fill="#e57b3d"/><circle cx="9.5" cy="9" r="2.3" fill="#e57b3d"/><path d="M6 2 L2.5 9 M6 2 L9.5 9" stroke="#e57b3d" stroke-width="1"/></svg>
<div class="a" style="left:107px;top:303.5px;font-size:9px;line-height:11px;color:#bbbbbb;letter-spacing:-0.85px;font-weight:normal;-webkit-text-stroke:0.15px #bbbbbb;">Actuator</div>
<svg style="left:19px;top:305px" width="11" height="11" viewBox="0 0 11 11"><path d="M8 2.5 A4 4 0 1 0 8.5 8" fill="none" stroke="#59a869" stroke-width="1.6"/><path d="M5.5 0 L10 2.5 L6 5 Z" fill="#59a869"/><rect x="6" y="6.5" width="4" height="4" fill="#d0d0d0"/></svg>
<svg style="left:19.5px;top:323.5px" width="11" height="11" viewBox="0 0 11 11"><path d="M1.2 9.8 L5.5 5.5" stroke="#c0c0c0" stroke-width="2" stroke-linecap="round"/><circle cx="7" cy="4" r="3" fill="#c0c0c0"/><path d="M7.5 0 L10.5 3.5 L8.8 4.2 L6.8 2.2 Z" fill="#3c3f41"/></svg>
<div class="a" style="left:18px;top:340px;width:13px;height:1px;background:#4a4d4f;"></div>
<div class="a" style="left:20px;top:349px;width:8.5px;height:8.5px;background:#db5c5c;"></div>
<svg style="left:19px;top:368px" width="11" height="9" viewBox="0 0 11 9"><path d="M0 2 H3 L4 0.5 H7 L8 2 H11 V9 H0 Z" fill="#c0c0c0"/><circle cx="5.5" cy="5.3" r="2" fill="#3c3f41"/></svg>
<svg style="left:19px;top:385.5px" width="9.5" height="9.5" viewBox="0 0 9.5 9.5"><circle cx="4.75" cy="4.75" r="3.2300000000000004" fill="#59a869"/><line x1="7.36" y1="4.75" x2="9.41" y2="4.75" stroke="#59a869" stroke-width="1.90"/><line x1="6.60" y1="6.60" x2="8.04" y2="8.04" stroke="#59a869" stroke-width="1.90"/><line x1="4.75" y1="7.36" x2="4.75" y2="9.41" stroke="#59a869" stroke-width="1.90"/><line x1="2.90" y1="6.60" x2="1.46" y2="8.04" stroke="#59a869" stroke-width="1.90"/><line x1="2.14" y1="4.75" x2="0.09" y2="4.75" stroke="#59a869" stroke-width="1.90"/><line x1="2.90" y1="2.90" x2="1.46" y2="1.46" stroke="#59a869" stroke-width="1.90"/><line x1="4.75" y1="2.14" x2="4.75" y2="0.09" stroke="#59a869" stroke-width="1.90"/><line x1="6.60" y1="2.90" x2="8.04" y2="1.46" stroke="#59a869" stroke-width="1.90"/><circle cx="4.75" cy="4.75" r="1.425" fill="#3c3f41"/></svg>
<svg style="left:25px;top:391px" width="6" height="6" viewBox="0 0 6 6"><path d="M0.5 5.5 L5 1 M2 1 H5 V4" stroke="#e0e0e0" stroke-width="1.3" fill="none"/></svg>
<svg style="left:19px;top:405px" width="11" height="11" viewBox="0 0 11 11"><rect x="3.5" y="0.5" width="7" height="10" fill="none" stroke="#c0c0c0" stroke-width="1"/><path d="M0 5.5 H7 M4.5 3 L7 5.5 L4.5 8" fill="none" stroke="#db5c5c" stroke-width="1.5"/></svg>
<div class="a" style="left:18px;top:423px;width:13px;height:1px;background:#4a4d4f;"></div>
<svg style="left:19px;top:428px" width="11" height="9" viewBox="0 0 11 9"><rect x="0" y="0" width="6" height="4" fill="#c0c0c0"/><rect x="7" y="0" width="4" height="4" fill="#c0c0c0"/><rect x="0" y="5" width="11" height="4" fill="#c0c0c0"/></svg>
<svg style="left:19.5px;top:454px" width="10" height="10" viewBox="0 0 10 10"><path d="M4 0.5 L9.5 6 L7.5 6.5 L5 9 L1 5 L3.5 2.5 Z" fill="#c0c0c0"/><path d="M3 7 L0.5 9.5" stroke="#c0c0c0" stroke-width="1.2"/></svg>
<svg style="left:40px;top:324.5px" width="9" height="11" viewBox="0 0 9 11"><path d="M4.5 10.5 V1.5 M1 5 L4.5 1.3 L8 5" fill="none" stroke="#c0c0c0" stroke-width="1.3"/></svg>
<svg style="left:40px;top:343.5px" width="9" height="11" viewBox="0 0 9 11"><path d="M4.5 0.5 V9.5 M1 6 L4.5 9.7 L8 6" fill="none" stroke="#c0c0c0" stroke-width="1.3"/></svg>
<svg style="left:39.5px;top:363px" width="10" height="9" viewBox="0 0 10 9"><path d="M0 1 H10 M0 4.5 H8 A2 2 0 0 1 8 8.5 H5 M0 8 H3 M6.5 7 L5 8.5 L6.5 10" fill="none" stroke="#c0c0c0" stroke-width="1.2"/></svg>
<svg style="left:39.5px;top:381.5px" width="10" height="10" viewBox="0 0 10 10"><path d="M0 1 H4 M0 4.5 H4 M0 9.2 H10 M7 0 V7 M4.8 5 L7 7.2 L9.2 5" fill="none" stroke="#c0c0c0" stroke-width="1.2"/></svg>
<svg style="left:39px;top:400.5px" width="11" height="11" viewBox="0 0 11 11"><rect x="2.5" y="0" width="6" height="3" fill="#c0c0c0"/><rect x="0" y="3.5" width="11" height="4.5" rx="0.8" fill="#c0c0c0"/><rect x="2.5" y="8.5" width="6" height="2.5" fill="#c0c0c0"/></svg>
<svg style="left:40px;top:418.5px" width="9" height="11" viewBox="0 0 9 11"><rect x="0" y="1" width="9" height="1.5" fill="#c0c0c0"/><rect x="3" y="0" width="3" height="1.5" fill="#c0c0c0"/><path d="M1 3.5 H8 L7.3 10.5 H1.7 Z" fill="#c0c0c0"/></svg>
<div class="clip cw" style="left:55px;top:318px;width:932px;height:277.6px;">
<div class="a" style="left:9px;top:-2.5px;font-size:11px;line-height:13px;color:#bbbbbb;letter-spacing:-0.56px;font-weight:normal;"><span style="color:#bbbbbb;-webkit-text-stroke:0.25px #bbbbbb">2023-01-31T18:52:23.026+08:00<span class="ws">··</span></span><span style="color:#63933c;-webkit-text-stroke:0.25px #63933c">INFO</span><span style="color:#bbbbbb;-webkit-text-stroke:0.25px #bbbbbb"><span class="ws">·</span></span><span style="color:#9c74b9;-webkit-text-stroke:0.25px #9c74b9">83111</span><span style="color:#bbbbbb;-webkit-text-stroke:0.25px #bbbbbb"><span class="ws">·</span>---<span class="ws">·</span>[<span class="ws">···········</span>main]<span class="ws">·</span></span><span style="color:#28998f;-webkit-text-stroke:0.25px #28998f">o.a.dubbo.registry.nacos.NacosRegistry<span class="ws">··</span></span><span style="color:#bbbbbb;-webkit-text-stroke:0.25px #bbbbbb"><span class="ws">·</span>:<span class="ws">··</span>[DUBBO]<span class="ws">·</span>Subscribe:<span class="ws">·</span>provider://192.168.31.191:</span></div>
<div class="a" style="left:9px;top:13.100000000000023px;font-size:11px;line-height:13px;color:#bbbbbb;letter-spacing:-0.56px;font-weight:normal;"><span style="color:#bbbbbb;-webkit-text-stroke:0.25px #bbbbbb">2023-01-31T18:52:23.027+08:00<span class="ws">··</span></span><span style="color:#63933c;-webkit-text-stroke:0.25px #63933c">INFO</span><span style="color:#bbbbbb;-webkit-text-stroke:0.25px #bbbbbb"><span class="ws">·</span></span><span style="color:#9c74b9;-webkit-text-stroke:0.25px #9c74b9">83111</span><span style="color:#bbbbbb;-webkit-text-stroke:0.25px #bbbbbb"><span class="ws">·</span>---<span class="ws">·</span>[<span class="ws">···········</span>main]<span class="ws">·</span></span><span style="color:#28998f;-webkit-text-stroke:0.25px #28998f">com.alibaba.nacos.client.naming<span class="ws">·········</span></span><span style="color:#bbbbbb;-webkit-text-stroke:0.25px #bbbbbb"><span class="ws">·</span>:<span class="ws">·</span>[SUBSCRIBE-SERVICE]<span class="ws">·</span>service:providers:org.apache</span></div>
<div class="a" style="left:9px;top:28.69999999999999px;font-size:11px;line-height:13px;color:#bbbbbb;letter-spacing:-0.56px;font-weight:normal;"><span style="color:#bbbbbb;-webkit-text-stroke:0.25px #bbbbbb">2023-01-31T18:52:23.031+08:00<span class="ws">··</span></span><span style="color:#63933c;-webkit-text-stroke:0.25px #63933c">INFO</span><span style="color:#bbbbbb;-webkit-text-stroke:0.25px #bbbbbb"><span class="ws">·</span></span><span style="color:#9c74b9;-webkit-text-stroke:0.25px #9c74b9">83111</span><span style="color:#bbbbbb;-webkit-text-stroke:0.25px #bbbbbb"><span class="ws">·</span>---<span class="ws">·</span>[<span class="ws">···········</span>main]<span class="ws">·</span></span><span style="color:#28998f;-webkit-text-stroke:0.25px #28998f">com.alibaba.nacos.client.naming<span class="ws">·········</span></span><span style="color:#bbbbbb;-webkit-text-stroke:0.25px #bbbbbb"><span class="ws">·</span>:<span class="ws">·</span>init<span class="ws">·</span>new<span class="ws">·</span>ips(0)<span class="ws">·</span>service:<span class="ws">·</span>DEFAULT_GROUP@@providers</span></div>
<div class="a" style="left:9px;top:44.30000000000001px;font-size:11px;line-height:13px;color:#bbbbbb;letter-spacing:-0.56px;font-weight:normal;"><span style="color:#bbbbbb;-webkit-text-stroke:0.25px #bbbbbb">2023-01-31T18:52:23.031+08:00<span class="ws">··</span></span><span style="color:#63933c;-webkit-text-stroke:0.25px #63933c">INFO</span><span style="color:#bbbbbb;-webkit-text-stroke:0.25px #bbbbbb"><span class="ws">·</span></span><span style="color:#9c74b9;-webkit-text-stroke:0.25px #9c74b9">83111</span><span style="color:#bbbbbb;-webkit-text-stroke:0.25px #bbbbbb"><span class="ws">·</span>---<span class="ws">·</span>[<span class="ws">···········</span>main]<span class="ws">·</span></span><span style="color:#28998f;-webkit-text-stroke:0.25px #28998f">com.alibaba.nacos.client.naming<span class="ws">·········</span></span><span style="color:#bbbbbb;-webkit-text-stroke:0.25px #bbbbbb"><span class="ws">·</span>:<span class="ws">·</span>current<span class="ws">·</span>ips:(0)<span class="ws">·</span>service:<span class="ws">·</span>DEFAULT_GROUP@@providers</span></div>
<div class="a" style="left:9px;top:59.89999999999998px;font-size:11px;line-height:13px;color:#bbbbbb;letter-spacing:-0.56px;font-weight:normal;"><span style="color:#bbbbbb;-webkit-text-stroke:0.25px #bbbbbb">2023-01-31T18:52:23.031+08:00<span class="ws">··</span></span><span style="color:#c4a02c;-webkit-text-stroke:0.25px #c4a02c">WARN</span><span style="color:#bbbbbb;-webkit-text-stroke:0.25px #bbbbbb"><span class="ws">·</span></span><span style="color:#9c74b9;-webkit-text-stroke:0.25px #9c74b9">83111</span><span style="color:#bbbbbb;-webkit-text-stroke:0.25px #bbbbbb"><span class="ws">·</span>---<span class="ws">·</span>[<span class="ws">···········</span>main]<span class="ws">·</span></span><span style="color:#28998f;-webkit-text-stroke:0.25px #28998f">o.a.dubbo.registry.nacos.NacosRegistry<span class="ws">··</span></span><span style="color:#bbbbbb;-webkit-text-stroke:0.25px #bbbbbb"><span class="ws">·</span>:<span class="ws">··</span>[DUBBO]<span class="ws">·</span>Received<span class="ws">·</span>empty<span class="ws">·</span>url<span class="ws">·</span>address<span class="ws">·</span>list<span class="ws">·</span>and<span class="ws">·</span>empty</span></div>
<div class="a" style="left:9px;top:75.5px;font-size:11px;line-height:13px;color:#bbbbbb;letter-spacing:-0.56px;font-weight:normal;"><span style="color:#bbbbbb;-webkit-text-stroke:0.25px #bbbbbb">2023-01-31T18:52:23.032+08:00<span class="ws">··</span></span><span style="color:#63933c;-webkit-text-stroke:0.25px #63933c">INFO</span><span style="color:#bbbbbb;-webkit-text-stroke:0.25px #bbbbbb"><span class="ws">·</span></span><span style="color:#9c74b9;-webkit-text-stroke:0.25px #9c74b9">83111</span><span style="color:#bbbbbb;-webkit-text-stroke:0.25px #bbbbbb"><span class="ws">·</span>---<span class="ws">·</span>[<span class="ws">···········</span>main]<span class="ws">·</span></span><span style="color:#28998f;-webkit-text-stroke:0.25px #28998f">o.a.dubbo.registry.nacos.NacosRegistry<span class="ws">··</span></span><span style="color:#bbbbbb;-webkit-text-stroke:0.25px #bbbbbb"><span class="ws">·</span>:<span class="ws">··</span>[DUBBO]<span class="ws">·</span>Notify<span class="ws">·</span>urls<span class="ws">·</span>for<span class="ws">·</span>subscribe<span class="ws">·</span>url<span class="ws">·</span>provider</span></div>
<div class="a" style="left:9px;top:91.10000000000002px;font-size:11px;line-height:13px;color:#bbbbbb;letter-spacing:-0.56px;font-weight:normal;"><span style="color:#bbbbbb;-webkit-text-stroke:0.25px #bbbbbb">2023-01-31T18:52:23.032+08:00<span class="ws">··</span></span><span style="color:#63933c;-webkit-text-stroke:0.25px #63933c">INFO</span><span style="color:#bbbbbb;-webkit-text-stroke:0.25px #bbbbbb"><span class="ws">·</span></span><span style="color:#9c74b9;-webkit-text-stroke:0.25px #9c74b9">83111</span><span style="color:#bbbbbb;-webkit-text-stroke:0.25px #bbbbbb"><span class="ws">·</span>---<span class="ws">·</span>[<span class="ws">···········</span>main]<span class="ws">·</span></span><span style="color:#28998f;-webkit-text-stroke:0.25px #28998f">com.alibaba.nacos.client.naming<span class="ws">·········</span></span><span style="color:#bbbbbb;-webkit-text-stroke:0.25px #bbbbbb"><span class="ws">·</span>:<span class="ws">·</span>[SUBSCRIBE-SERVICE]<span class="ws">·</span>service:providers:org.apache</span></div>
<div class="a" style="left:9px;top:106.69999999999999px;font-size:11px;line-height:13px;color:#bbbbbb;letter-spacing:-0.56px;font-weight:normal;"><span style="color:#bbbbbb;-webkit-text-stroke:0.25px #bbbbbb">2023-01-31T18:52:23.032+08:00<span class="ws">··</span></span><span style="color:#63933c;-webkit-text-stroke:0.25px #63933c">INFO</span><span style="color:#bbbbbb;-webkit-text-stroke:0.25px #bbbbbb"><span class="ws">·</span></span><span style="color:#9c74b9;-webkit-text-stroke:0.25px #9c74b9">83111</span><span style="color:#bbbbbb;-webkit-text-stroke:0.25px #bbbbbb"><span class="ws">·</span>---<span class="ws">·</span>[<span class="ws">···········</span>main]<span class="ws">·</span></span><span style="color:#28998f;-webkit-text-stroke:0.25px #28998f">org.apache.dubbo.config.ServiceConfig<span class="ws">···</span></span><span style="color:#bbbbbb;-webkit-text-stroke:0.25px #bbbbbb"><span class="ws">·</span>:<span class="ws">··</span>[DUBBO]<span class="ws">·</span>Successfully<span class="ws">·</span>registered<span class="ws">·</span>interface<span class="ws">·</span>application</span></div>
<div class="a" style="left:9px;top:122.30000000000001px;font-size:11px;line-height:13px;color:#bbbbbb;letter-spacing:-0.56px;font-weight:normal;"><span style="color:#bbbbbb;-webkit-text-stroke:0.25px #bbbbbb">2023-01-31T18:52:23.032+08:00<span class="ws">··</span></span><span style="color:#63933c;-webkit-text-stroke:0.25px #63933c">INFO</span><span style="color:#bbbbbb;-webkit-text-stroke:0.25px #bbbbbb"><span class="ws">·</span></span><span style="color:#9c74b9;-webkit-text-stroke:0.25px #9c74b9">83111</span><span style="color:#bbbbbb;-webkit-text-stroke:0.25px #bbbbbb"><span class="ws">·</span>---<span class="ws">·</span>[<span class="ws">···········</span>main]<span class="ws">·</span></span><span style="color:#28998f;-webkit-text-stroke:0.25px #28998f">.c.m.ConfigurableMetadataServiceExporter</span><span style="color:#bbbbbb;-webkit-text-stroke:0.25px #bbbbbb"><span class="ws">·</span>:<span class="ws">··</span>[DUBBO]<span class="ws">·</span>The<span class="ws">·</span>MetadataService<span class="ws">·</span>exports<span class="ws">·</span>urls<span class="ws">·</span>:<span class="ws">·</span>[dubbo</span></div>
<div class="a" style="left:9px;top:137.89999999999998px;font-size:11px;line-height:13px;color:#bbbbbb;letter-spacing:-0.56px;font-weight:normal;"><span style="color:#bbbbbb;-webkit-text-stroke:0.25px #bbbbbb">2023-01-31T18:52:23.032+08:00<span class="ws">··</span></span><span style="color:#63933c;-webkit-text-stroke:0.25px #63933c">INFO</span><span style="color:#bbbbbb;-webkit-text-stroke:0.25px #bbbbbb"><span class="ws">·</span></span><span style="color:#9c74b9;-webkit-text-stroke:0.25px #9c74b9">83111</span><span style="color:#bbbbbb;-webkit-text-stroke:0.25px #bbbbbb"><span class="ws">·</span>---<span class="ws">·</span>[<span class="ws">···········</span>main]<span class="ws">·</span></span><span style="color:#28998f;-webkit-text-stroke:0.25px #28998f">o.a.d.r.c.m.ServiceInstanceMetadataUtils</span><span style="color:#bbbbbb;-webkit-text-stroke:0.25px #bbbbbb"><span class="ws">·</span>:<span class="ws">··</span>[DUBBO]<span class="ws">·</span>Start<span class="ws">·</span>registering<span class="ws">·</span>instance<span class="ws">·</span>address<span class="ws">·</span>to</span></div>
<div class="a" style="left:9px;top:153.5px;font-size:11px;line-height:13px;color:#bbbbbb;letter-spacing:-0.56px;font-weight:normal;"><span style="color:#bbbbbb;-webkit-text-stroke:0.25px #bbbbbb">2023-01-31T18:52:23.036+08:00<span class="ws">··</span></span><span style="color:#c4a02c;-webkit-text-stroke:0.25px #c4a02c">WARN</span><span style="color:#bbbbbb;-webkit-text-stroke:0.25px #bbbbbb"><span class="ws">·</span></span><span style="color:#9c74b9;-webkit-text-stroke:0.25px #9c74b9">83111</span><span style="color:#bbbbbb;-webkit-text-stroke:0.25px #bbbbbb"><span class="ws">·</span>---<span class="ws">·</span>[<span class="ws">···········</span>main]<span class="ws">·</span></span><span style="color:#28998f;-webkit-text-stroke:0.25px #28998f">o.a.d.r.client.AbstractServiceDiscovery<span class="ws">·</span></span><span style="color:#bbbbbb;-webkit-text-stroke:0.25px #bbbbbb"><span class="ws">·</span>:<span class="ws">··</span>[DUBBO]<span class="ws">·</span>No<span class="ws">·</span>valid<span class="ws">·</span>instance<span class="ws">·</span>found,<span class="ws">·</span>stop<span class="ws">·</span>registering</span></div>
<div class="a" style="left:9px;top:169.10000000000002px;font-size:11px;line-height:13px;color:#bbbbbb;letter-spacing:-0.56px;font-weight:normal;"><span style="color:#bbbbbb;-webkit-text-stroke:0.25px #bbbbbb">2023-01-31T18:52:23.037+08:00<span class="ws">··</span></span><span style="color:#63933c;-webkit-text-stroke:0.25px #63933c">INFO</span><span style="color:#bbbbbb;-webkit-text-stroke:0.25px #bbbbbb"><span class="ws">·</span></span><span style="color:#9c74b9;-webkit-text-stroke:0.25px #9c74b9">83111</span><span style="color:#bbbbbb;-webkit-text-stroke:0.25px #bbbbbb"><span class="ws">·</span>---<span class="ws">·</span>[<span class="ws">···········</span>main]<span class="ws">·</span></span><span style="color:#28998f;-webkit-text-stroke:0.25px #28998f">o.a.d.c.d.DefaultApplicationDeployer<span class="ws">····</span></span><span style="color:#bbbbbb;-webkit-text-stroke:0.25px #bbbbbb"><span class="ws">·</span>:<span class="ws">··</span>[DUBBO]<span class="ws">·</span>Dubbo<span class="ws">·</span>Application[1.1](extensibility-filter</span></div>
<div class="a" style="left:9px;top:184.7px;font-size:11px;line-height:13px;color:#bbbbbb;letter-spacing:-0.56px;font-weight:normal;"><span style="color:#bbbbbb;-webkit-text-stroke:0.25px #bbbbbb">2023-01-31T18:52:23.039+08:00<span class="ws">··</span></span><span style="color:#63933c;-webkit-text-stroke:0.25px #63933c">INFO</span><span style="color:#bbbbbb;-webkit-text-stroke:0.25px #bbbbbb"><span class="ws">·</span></span><span style="color:#9c74b9;-webkit-text-stroke:0.25px #9c74b9">83111</span><span style="color:#bbbbbb;-webkit-text-stroke:0.25px #bbbbbb"><span class="ws">·</span>---<span class="ws">·</span>[<span class="ws">···········</span>main]<span class="ws">·</span></span><span style="color:#28998f;-webkit-text-stroke:0.25px #28998f">c.ExtensibilityFilterConsumerApplication</span><span style="color:#bbbbbb;-webkit-text-stroke:0.25px #bbbbbb"><span class="ws">·</span>:<span class="ws">·</span>Started<span class="ws">·</span>ExtensibilityFilterConsumerApplication<span class="ws">·</span>in</span></div>
<div class="a" style="left:9px;top:201.29999999999995px;font-size:11px;line-height:13px;color:#bbbbbb;letter-spacing:-0.56px;font-weight:normal;"><span style="color:#bbbbbb;-webkit-text-stroke:0.25px #bbbbbb">Dubbo<span class="ws">·</span>Remote<span class="ws">·</span>Return<span class="ws">·</span>======&gt;<span class="ws">·</span>Hello,<span class="ws">·</span>dubbo's<span class="ws">·</span>customized<span class="ws">·</span>AppendedFilter</span></div>
<div class="a" style="left:9px;top:215.89999999999998px;font-size:11px;line-height:13px;color:#bbbbbb;letter-spacing:-0.56px;font-weight:normal;"><span style="color:#bbbbbb;-webkit-text-stroke:0.25px #bbbbbb">2023-01-31T18:52:23.061+08:00<span class="ws">··</span></span><span style="color:#63933c;-webkit-text-stroke:0.25px #63933c">INFO</span><span style="color:#bbbbbb;-webkit-text-stroke:0.25px #bbbbbb"><span class="ws">·</span></span><span style="color:#9c74b9;-webkit-text-stroke:0.25px #9c74b9">83111</span><span style="color:#bbbbbb;-webkit-text-stroke:0.25px #bbbbbb"><span class="ws">·</span>---<span class="ws">·</span>[pool-1-thread-1]<span class="ws">·</span></span><span style="color:#28998f;-webkit-text-stroke:0.25px #28998f">.b.c.e.AwaitingNonWebApplicationListener</span><span style="color:#bbbbbb;-webkit-text-stroke:0.25px #bbbbbb"><span class="ws">·</span>:<span class="ws">··</span>[Dubbo]<span class="ws">·</span>Current<span class="ws">·</span>Spring<span class="ws">·</span>Boot<span class="ws">·</span>Application<span class="ws">·</span>is<span class="ws">·</span>await</span></div>
<div class="a" style="left:9px;top:231.5px;font-size:11px;line-height:13px;color:#bbbbbb;letter-spacing:-0.56px;font-weight:normal;"><span style="color:#bbbbbb;-webkit-text-stroke:0.25px #bbbbbb">2023-01-31T18:52:23.263+08:00<span class="ws">··</span></span><span style="color:#63933c;-webkit-text-stroke:0.25px #63933c">INFO</span><span style="color:#bbbbbb;-webkit-text-stroke:0.25px #bbbbbb"><span class="ws">·</span></span><span style="color:#9c74b9;-webkit-text-stroke:0.25px #9c74b9">83111</span><span style="color:#bbbbbb;-webkit-text-stroke:0.25px #bbbbbb"><span class="ws">·</span>---<span class="ws">·</span>[tor-localhost-7]<span class="ws">·</span></span><span style="color:#28998f;-webkit-text-stroke:0.25px #28998f">com.alibaba.nacos.common.remote.client<span class="ws">··</span></span><span style="color:#bbbbbb;-webkit-text-stroke:0.25px #bbbbbb"><span class="ws">·</span>:<span class="ws">·</span>[5469f9b3-1118-406c-96fe-1e128a71965f]<span class="ws">·</span>Receive</span></div>
<div class="a" style="left:9px;top:247.10000000000002px;font-size:11px;line-height:13px;color:#bbbbbb;letter-spacing:-0.56px;font-weight:normal;"><span style="color:#bbbbbb;-webkit-text-stroke:0.25px #bbbbbb">2023-01-31T18:52:23.264+08:00<span class="ws">··</span></span><span style="color:#63933c;-webkit-text-stroke:0.25px #63933c">INFO</span><span style="color:#bbbbbb;-webkit-text-stroke:0.25px #bbbbbb"><span class="ws">·</span></span><span style="color:#9c74b9;-webkit-text-stroke:0.25px #9c74b9">83111</span><span style="color:#bbbbbb;-webkit-text-stroke:0.25px #bbbbbb"><span class="ws">·</span>---<span class="ws">·</span>[tor-localhost-7]<span class="ws">·</span></span><span style="color:#28998f;-webkit-text-stroke:0.25px #28998f">com.alibaba.nacos.common.remote.client<span class="ws">··</span></span><span style="color:#bbbbbb;-webkit-text-stroke:0.25px #bbbbbb"><span class="ws">·</span>:<span class="ws">·</span>[5469f9b3-1118-406c-96fe-1e128a71965f]<span class="ws">·</span>Ack<span class="ws">·</span>server</span></div>
<div class="a" style="left:9px;top:262.70000000000005px;font-size:11px;line-height:13px;color:#bbbbbb;letter-spacing:-0.56px;font-weight:normal;"><span style="color:#bbbbbb;-webkit-text-stroke:0.25px #bbbbbb">2023-01-31T18:52:23.571+08:00<span class="ws">··</span></span><span style="color:#63933c;-webkit-text-stroke:0.25px #63933c">INFO</span><span style="color:#bbbbbb;-webkit-text-stroke:0.25px #bbbbbb"><span class="ws">·</span></span><span style="color:#9c74b9;-webkit-text-stroke:0.25px #9c74b9">83111</span><span style="color:#bbbbbb;-webkit-text-stroke:0.25px #bbbbbb"><span class="ws">·</span>---<span class="ws">·</span>[or-localhost-13]<span class="ws">·</span></span><span style="color:#28998f;-webkit-text-stroke:0.25px #28998f">com.alibaba.nacos.common.remote.client<span class="ws">··</span></span><span style="color:#bbbbbb;-webkit-text-stroke:0.25px #bbbbbb"><span class="ws">·</span>:<span class="ws">·</span>[79f277d9-e1a3-4ca6-9b3a-017014502b7b]<span class="ws">·</span>Receive</span></div>
<div class="a" style="left:5px;top:198px;width:418px;height:17.5px;background:transparent;border:2px solid #c4473a;border-radius:3.5px;"></div>
</div>
<div class="a" style="left:31.7px;top:600.1px;font-size:8.8px;line-height:10px;color:#bbbbbb;letter-spacing:-0.7px;font-weight:normal;-webkit-text-stroke:0.15px #bbbbbb;">Git</div>
<div class="a" style="left:69.7px;top:600.1px;font-size:8.8px;line-height:10px;color:#bbbbbb;letter-spacing:-0.7px;font-weight:normal;-webkit-text-stroke:0.15px #bbbbbb;">Run</div>
<div class="a" style="left:108px;top:600.1px;font-size:8.8px;line-height:10px;color:#bbbbbb;letter-spacing:-0.7px;font-weight:normal;-webkit-text-stroke:0.15px #bbbbbb;">TODO</div>
<div class="a" style="left:151.7px;top:600.1px;font-size:8.8px;line-height:10px;color:#bbbbbb;letter-spacing:-0.7px;font-weight:normal;-webkit-text-stroke:0.15px #bbbbbb;">Problems</div>
<div class="a" style="left:215px;top:600.1px;font-size:8.8px;line-height:10px;color:#bbbbbb;letter-spacing:-0.7px;font-weight:normal;-webkit-text-stroke:0.15px #bbbbbb;">Terminal</div>
<div class="a" style="left:278px;top:600.1px;font-size:8.8px;line-height:10px;color:#bbbbbb;letter-spacing:-0.7px;font-weight:normal;-webkit-text-stroke:0.15px #bbbbbb;">Endpoints</div>
<div class="a" style="left:346px;top:600.1px;font-size:8.8px;line-height:10px;color:#bbbbbb;letter-spacing:-0.7px;font-weight:normal;-webkit-text-stroke:0.15px #bbbbbb;">Services</div>
<div class="a" style="left:410px;top:600.1px;font-size:8.8px;line-height:10px;color:#bbbbbb;letter-spacing:-0.7px;font-weight:normal;-webkit-text-stroke:0.15px #bbbbbb;">Profiler</div>
<div class="a" style="left:473px;top:600.1px;font-size:8.8px;line-height:10px;color:#bbbbbb;letter-spacing:-0.7px;font-weight:normal;-webkit-text-stroke:0.15px #bbbbbb;">Build</div>
<div class="a" style="left:523px;top:600.1px;font-size:8.8px;line-height:10px;color:#bbbbbb;letter-spacing:-0.7px;font-weight:normal;-webkit-text-stroke:0.15px #bbbbbb;">Spring</div>
<div class="a" style="left:575px;top:600.1px;font-size:8.8px;line-height:10px;color:#bbbbbb;letter-spacing:-0.7px;font-weight:normal;-webkit-text-stroke:0.15px #bbbbbb;">CheckStyle</div>
<div class="a" style="left:650px;top:600.1px;font-size:8.8px;line-height:10px;color:#bbbbbb;letter-spacing:-0.7px;font-weight:normal;-webkit-text-stroke:0.15px #bbbbbb;">Dependencies</div>
<svg style="left:20px;top:599px" width="6" height="9" viewBox="0 0 6 9"><path d="M1 0 V9 M5 0 V3 Q5 5 1 6" fill="none" stroke="#afb1b3" stroke-width="1.2"/></svg>
<svg style="left:58.5px;top:599px" width="7" height="9" viewBox="0 0 7 9"><path d="M0 0 L6.5 4.5 L0 9 Z" fill="#afb1b3"/></svg>
<div class="a" style="left:64px;top:606px;width:3px;height:3px;background:#59d35a;border-radius:2px"></div>
<svg style="left:97px;top:599px" width="8" height="8" viewBox="0 0 8 8"><path d="M0 1 H1.5 M3 1 H8 M0 4 H1.5 M3 4 H8 M0 7 H1.5 M3 7 H8" stroke="#afb1b3" stroke-width="1.2"/></svg>
<svg style="left:141px;top:599px" width="8" height="8" viewBox="0 0 8 8"><circle cx="4" cy="4" r="4" fill="#afb1b3"/><path d="M4 1.8 V4.8 M4 5.8 V6.8" stroke="#3c3f41" stroke-width="1.2"/></svg>
<svg style="left:203px;top:599px" width="8" height="8" viewBox="0 0 8 8"><rect x="0" y="0" width="8" height="8" fill="#afb1b3"/><path d="M1.5 2 L3.5 4 L1.5 6 M4 6.5 H6.5" fill="none" stroke="#3c3f41" stroke-width="1"/></svg>
<svg style="left:266px;top:598.5px" width="9" height="10" viewBox="0 0 9 10"><circle cx="4.5" cy="1.8" r="1.6" fill="#afb1b3"/><circle cx="1.6" cy="8" r="1.6" fill="#afb1b3"/><circle cx="7.4" cy="8" r="1.6" fill="#afb1b3"/><path d="M4.5 2 L1.6 8 M4.5 2 L7.4 8" stroke="#afb1b3"/></svg>
<svg style="left:335px;top:599px" width="8" height="8" viewBox="0 0 8 8"><circle cx="4" cy="4" r="4" fill="#afb1b3"/><path d="M3 2 L6 4 L3 6 Z" fill="#3c3f41"/></svg>
<svg style="left:397px;top:598.5px" width="9" height="10" viewBox="0 0 9 10"><circle cx="4" cy="4.5" r="3.5" fill="none" stroke="#afb1b3" stroke-width="1.1"/><path d="M5 5 L9 7.5 L5 10 Z" fill="#afb1b3"/></svg>
<svg style="left:461px;top:599px" width="8" height="9" viewBox="0 0 8 9"><path d="M0 2 L3 0 L5 1.5 L4 2.5 L8 8 L7 9 L3 3.5 L1.5 4 Z" fill="#afb1b3"/></svg>
<svg style="left:512px;top:599px" width="9" height="8" viewBox="0 0 9 8"><path d="M0.5 7.5 Q1 1 8.5 0.5 Q7.5 6.5 1.5 7.5 Z" fill="#afb1b3"/></svg>
<svg style="left:565px;top:599px" width="6" height="9" viewBox="0 0 6 9"><rect x="0" y="1" width="5.5" height="8" rx="1" fill="#e7c13a"/><rect x="1" y="0" width="3.5" height="2" fill="#e7c13a"/></svg>
<svg style="left:638px;top:598.5px" width="9" height="10" viewBox="0 0 9 10"><path d="M4.5 0.5 L8.5 2.5 L4.5 4.5 L0.5 2.5 Z M0.5 5 L4.5 7 L8.5 5 M0.5 7.5 L4.5 9.5 L8.5 7.5" fill="none" stroke="#afb1b3" stroke-width="1"/></svg>
</body></html>
